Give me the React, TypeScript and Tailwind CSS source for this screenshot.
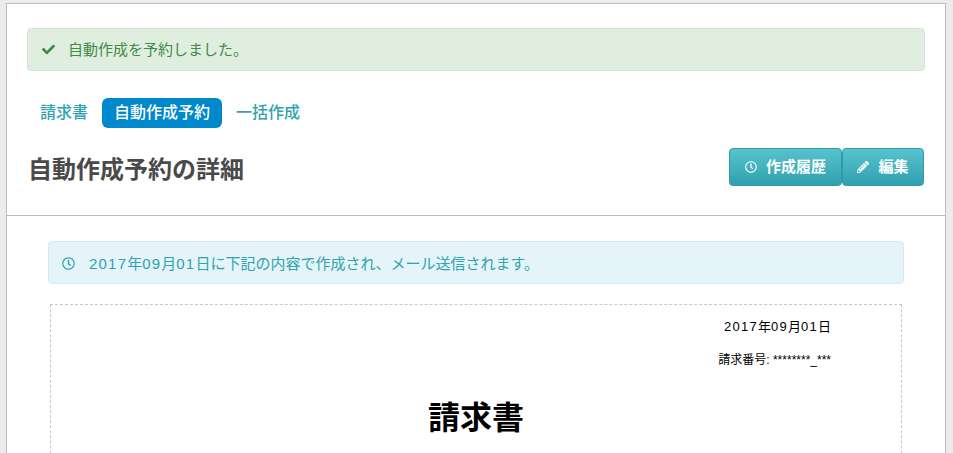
import { FaCheck, FaPencilAlt, FaRegClock } from "react-icons/fa";

export default function App() {
  return (
    <div className="h-[453px] w-[953px] overflow-hidden bg-[#ececec] pl-[6px] pr-[7px] pt-[3px] font-['Liberation_Sans','Noto_Sans_CJK_JP',sans-serif]">
      <div className="h-[460px] border border-b-0 border-[#bdbdbd] bg-white">
        <header className="h-[212px] border-b border-[#bdbdbd] pl-5 pr-[21px] pt-6">
          <div className="-mr-px flex h-[43px] items-center rounded border border-[#d3e6d3] bg-[#e0eee0] pl-[14px] text-[15px] text-[#3f8a45]">
            <FaCheck className="mr-[13px] h-[13px] w-[13px]" />
            <span className="pt-[2px]">自動作成を予約しました。</span>
          </div>

          <nav className="-ml-px mt-[27px] flex h-[30px] items-center text-base font-medium text-[#2fa3b0]">
            <a className="px-[14px]">請求書</a>
            <a className="rounded-md bg-[#0088cc] px-3 py-[3px] leading-6 text-white">自動作成予約</a>
            <a className="px-[14px]">一括作成</a>
          </nav>

          <div className="mt-5 flex items-center justify-between">
            <h1 className="pl-px pt-[6px] text-2xl font-bold text-[#4a4a4a]">自動作成予約の詳細</h1>
            <div className="flex">
              <button
                type="button"
                className="flex h-[38px] w-[113px] items-center justify-center gap-[9px] rounded border border-[#2f9aa8] bg-gradient-to-b from-[#57c3cf] to-[#2fa0ae] text-[15px] font-bold text-white"
              >
                <FaRegClock className="h-3 w-3" />
                作成履歴
              </button>
              <button
                type="button"
                className="flex h-[38px] w-[82px] items-center justify-center gap-[9px] rounded border border-[#2f9aa8] bg-gradient-to-b from-[#57c3cf] to-[#2fa0ae] text-[15px] font-bold text-white"
              >
                <FaPencilAlt className="h-3 w-3" />
                編集
              </button>
            </div>
          </div>
        </header>

        <section className="pl-[41px] pr-[41px] pt-[25px]">
          <div className="flex h-[43px] items-center rounded border border-[#d5edf2] bg-[#e4f4f8] pl-[13px] text-[15px] text-[#2fa3b0]">
            <FaRegClock className="mr-[14px] mt-[2px] h-[13px] w-[13px]" />
            <span className="pt-[3px]">
              <span className="tracking-[1.2px]">2017</span>年<span className="tracking-[1.2px]">09</span>月
              <span className="tracking-[1.2px]">01</span>日に下記の内容で作成され、メール送信されます。
            </span>
          </div>

          <div className="ml-[2px] mr-[2px] mt-[20px] h-[200px] border border-dashed border-[#c8c8c8] pl-[70px] pr-[70px] pt-[13px] text-black">
            <p className="text-right text-[13px] leading-[18px]">
              <span className="tracking-[1.25px]">2017</span>年<span className="tracking-[1.25px]">09</span>月
              <span className="tracking-[1.25px]">01</span>日
            </p>
            <p className="mt-[15px] text-right text-xs leading-[18px]">請求番号: ********_***</p>
            <h2 className="mt-[27px] text-center text-[32px] font-bold leading-[44px]">請求書</h2>
          </div>
        </section>
      </div>
    </div>
  );
}
